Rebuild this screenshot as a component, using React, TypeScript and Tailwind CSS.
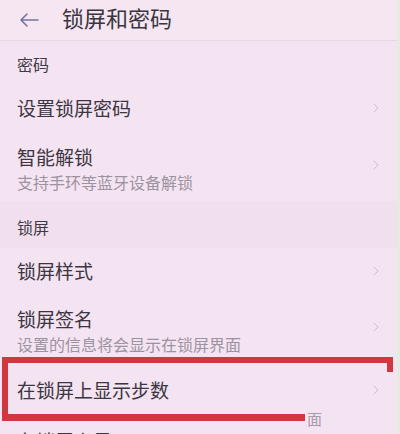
import { ChevronRight } from "lucide-react";

const font = {
  fontFamily: '"Noto Sans CJK SC", "Noto Sans", sans-serif',
};

type Item = { title: string; sub?: string; h: string };

const Row = ({ title, sub, h }: Item) => (
  <div className={`flex items-center justify-between pl-[17px] pr-[16px] ${h}`}>
    <div className={`flex flex-col ${sub ? "pt-[8px]" : ""}`}>
      <span className="text-[19px] leading-[24px] text-[#3b3641]">{title}</span>
      {sub && (
        <span className="text-[16px] leading-[22px] text-[#9c92a0] mt-[2px]">{sub}</span>
      )}
    </div>
    <ChevronRight size={16} strokeWidth={1.5} className="text-[#cbbfcb]" />
  </div>
);

const Label = ({ text, h }: { text: string; h: string }) => (
  <div className={`flex items-center pl-[17px] ${h}`}>
    <span className="text-[16px] text-[#3e3944]">{text}</span>
  </div>
);

export default function App() {
  return (
    <div
      className="relative w-[400px] h-[434px] overflow-hidden bg-[#f4e3f1]"
      style={font}
    >
      {/* header */}
      <div className="flex items-center h-[41px] border-b border-[#e8d6e6] bg-[#f5e6f2]">
        <svg
          width="20"
          height="16"
          viewBox="0 0 20 16"
          className="ml-[19px]"
          fill="none"
          stroke="#7375a0"
          strokeWidth="1.6"
          strokeLinecap="round"
          strokeLinejoin="round"
        >
          <path d="M19 8H2M8 2L2 8l6 6" />
        </svg>
        <span className="ml-[23px] text-[22px] text-[#3a3540] -mt-[6px]">锁屏和密码</span>
      </div>

      <Label text="密码" h="h-[46px]" />
      <Row title="设置锁屏密码" h="h-[42px]" />
      <Row title="智能解锁" sub="支持手环等蓝牙设备解锁" h="h-[72px]" />
      <div className="bg-[#f1dfee]">
        <Label text="锁屏" h="h-[47px] pt-[4px]" />
      </div>
      <Row title="锁屏样式" h="h-[45px]" />
      <Row title="锁屏签名" sub="设置的信息将会显示在锁屏界面" h="h-[68px]" />
      <Row title="在锁屏上显示步数" h="h-[58px]" />
      <div className="pl-[17px] mt-[10px] text-[19px] leading-[24px] text-[#3b3641]">在锁屏上显示</div>

      {/* partially hidden subtitle fragment */}
      <span className="absolute left-[307px] top-[408px] text-[15px] text-[#a69cab]">面</span>

      {/* red annotation box */}
      <div className="absolute left-[2px] top-[357px] w-[391px] h-[6px] bg-[#d2363f]" />
      <div className="absolute left-[387px] top-[357px] w-[6px] h-[15px] bg-[#d2363f]" />
      <div className="absolute left-[2px] top-[357px] w-[6px] h-[64px] bg-[#d2363f]" />
      <div className="absolute left-[2px] top-[414px] w-[303px] h-[7px] bg-[#d2363f]" />

      {/* right edge tint */}
      <div className="absolute right-0 top-0 w-[3px] h-full bg-[#e3ecdf]" />
    </div>
  );
}
